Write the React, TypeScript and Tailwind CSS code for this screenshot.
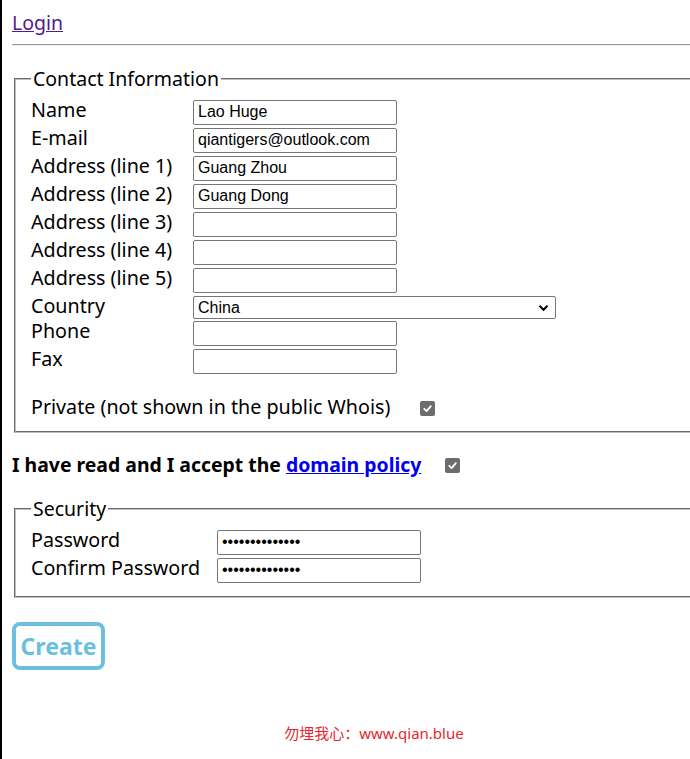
import React from "react";

const font = "font-['Noto_Sans','Noto_Sans_CJK_SC',sans-serif]";
const label = `${font} text-[19.7px] text-black`;
const legend = `${font} px-[2px] text-[19.5px] leading-[26px] text-black`;
const field =
    "h-[25px] w-[204px] rounded-[2px] border border-[#767676] bg-white px-[4px] font-['Liberation_Sans',Arial,sans-serif] text-[16px] text-black outline-none";

function Check() {
    return (
        <span className="inline-flex h-[15px] w-[15px] items-center justify-center rounded-[2px] bg-[#6d6d6d]">
            <svg width="11" height="11" viewBox="0 0 12 12" fill="none">
                <path d="M2.5 6.3 5 8.8 9.6 3.4" stroke="white" strokeWidth="2" strokeLinecap="round" strokeLinejoin="round" />
            </svg>
        </span>
    );
}

function Row({ name, value, w = "w-[162px]" }: { name: string; value?: string; w?: string }) {
    return (
        <div className="flex h-[28px] items-center">
            <div className={`${label} ${w} mb-[4px] leading-[24px]`}>{name}</div>
            <input className={field} defaultValue={value} />
        </div>
    );
}

export default function App() {
    return (
        <div className="h-[759px] w-[690px] overflow-hidden border-l-2 border-black bg-white">
            <div className="w-[734px] pl-[10px]">
                <div className="pt-[9px]">
                    <a href="#" className={`${font} text-[19.5px] leading-[28px] text-[#551a8b] underline`}>
                        Login
                    </a>
                </div>
                <div className="mt-[7px] border-t border-b border-t-[#9a9a9a] border-b-[#eeeeee]" />

                <fieldset className="mx-[2px] mt-[20px] border-2 border-[#c0c0c0] px-[15px] pb-[11px] pt-[6px] [border-style:groove]">
                    <legend className={legend}>Contact Information</legend>
                    <Row name="Name" value="Lao Huge" />
                    <Row name="E-mail" value="qiantigers@outlook.com" />
                    <Row name="Address (line 1)" value="Guang Zhou" />
                    <Row name="Address (line 2)" value="Guang Dong" />
                    <Row name="Address (line 3)" />
                    <Row name="Address (line 4)" />
                    <Row name="Address (line 5)" />
                    <div className="flex h-[25px] items-start">
                        <div className={`${label} w-[162px] leading-[24px]`}>Country</div>
                        <div className="relative mt-[2px] flex h-[23px] w-[363px] items-center rounded-[2px] border border-[#767676] bg-white pl-[4px] font-['Liberation_Sans',Arial,sans-serif] text-[16px] text-black">
                            China
                            <svg className="absolute right-[6px] top-[7px]" width="11" height="8" viewBox="0 0 11 8" fill="none">
                                <path d="M1.5 1.8 5.5 5.8 9.5 1.8" stroke="black" strokeWidth="2" />
                            </svg>
                        </div>
                    </div>
                    <Row name="Phone" />
                    <Row name="Fax" />
                    <div className="mt-[19px] flex items-center">
                        <div className={`${label} leading-[26px]`}>Private (not shown in the public Whois)</div>
                        <span className="ml-[30px] mt-[1px]">
                            <Check />
                        </span>
                    </div>
                </fieldset>

                <div className="mt-[19px] flex items-center">
                    <span className={`${font} text-[19.4px] font-bold leading-[26px] text-black`}>
                        I have read and I accept the{" "}
                        <a href="#" className="text-[#0000ee] underline">
                            domain policy
                        </a>
                    </span>
                    <span className="ml-[24px]">
                        <Check />
                    </span>
                </div>

                <fieldset className="mx-[2px] mt-[18px] border-2 border-[#c0c0c0] px-[15px] pb-[12px] pt-[6px] [border-style:groove]">
                    <legend className={legend}>Security</legend>
                    <div className="flex h-[28px] items-center">
                        <div className={`${label} mb-[4px] w-[186px] leading-[24px]`}>Password</div>
                        <input type="password" className={field} defaultValue="qiantigers1234" />
                    </div>
                    <div className="flex h-[28px] items-center">
                        <div className={`${label} mb-[4px] w-[186px] leading-[24px]`}>Confirm Password</div>
                        <input type="password" className={field} defaultValue="qiantigers1234" />
                    </div>
                </fieldset>

                <button className="mt-[24px] flex h-[48px] w-[93px] items-center justify-center rounded-[8px] border-4 border-[#6bbfe0] font-['Noto_Sans',sans-serif] text-[23px] font-bold text-[#6bbfe0]">
                    Create
                </button>

                <div className={`mt-[52px] text-center ${font} text-[15px] text-[#e8262e]`}>
                    勿埋我心：www.qian.blue
                </div>
            </div>
        </div>
    );
}
